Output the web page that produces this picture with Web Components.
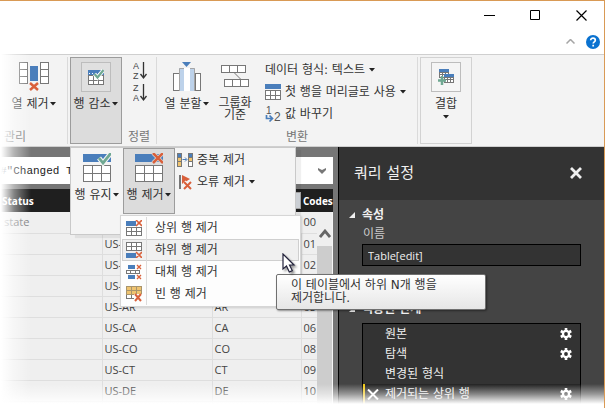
<!DOCTYPE html>
<html lang="ko">
<head>
<meta charset="utf-8">
<title>쿼리 편집기</title>
<style>
  html, body { margin: 0; height: 100%; overflow: hidden; }
  body { background: #fff; color: #333; font: 12px/16px "DejaVu Sans", "Noto Sans CJK KR", sans-serif; }
</style>
</head>
<body>
<query-window>
  <title-bar slot="title"></title-bar>

  <ribbon-bar slot="ribbon">
    <ribbon-group label="관리" style="--w:67px;--align:flex-start;--pad:8px;--label-pad:4px">
      <tool-button icon="colRemove" label="열 제거" caret></tool-button>
    </ribbon-group>
    <ribbon-group style="--w:56px;--pad:2px">
      <tool-button icon="reduce" label="행 감소" caret boxed pressed></tool-button>
      <drop-panel slot="popup">
        <tool-button icon="rowsKeep" label="행 유지" caret></tool-button>
        <tool-button icon="rowsRemove" label="행 제거" caret pressed></tool-button>
        <tool-stack>
          <tool-row icon="dup" label="중복 제거"></tool-row>
          <tool-row icon="err" label="오류 제거" caret></tool-row>
        </tool-stack>
        <menu-list slot="menu">
          <menu-item icon="mTop">상위 행 제거</menu-item>
          <menu-item icon="mBottom" active>하위 행 제거
            <tip-box slot="tip">이 테이블에서 하위 N개 행을 제거합니다.</tip-box>
          </menu-item>
          <menu-item icon="mAlt">대체 행 제거</menu-item>
          <menu-item icon="mBlank">빈 행 제거</menu-item>
        </menu-list>
      </drop-panel>
    </ribbon-group>
    <ribbon-group label="정렬" style="--w:31px;--align:flex-start;--label-pad:3px">
      <tool-stack sort>
        <tool-row icon="az" name="오름차순 정렬"></tool-row>
        <tool-row icon="za" name="내림차순 정렬"></tool-row>
      </tool-stack>
    </ribbon-group>
    <ribbon-group label="변환" style="--w:260px;--pad:4px;--label-pad:20px">
      <tool-button icon="split" label="열 분할" caret></tool-button>
      <tool-button icon="group" label="그룹화 기준" wrap></tool-button>
      <tool-stack wide>
        <tool-row label="데이터 형식: 텍스트" caret></tool-row>
        <tool-row icon="header" label="첫 행을 머리글로 사용" caret></tool-row>
        <tool-row icon="replace" label="값 바꾸기"></tool-row>
      </tool-stack>
    </ribbon-group>
    <ribbon-group last style="--w:58px;--pad:2px">
      <tool-button icon="combine" label="결합" caret below boxed framed></tool-button>
    </ribbon-group>
  </ribbon-bar>

  <data-view slot="data"></data-view>

  <settings-pane slot="side" heading="쿼리 설정">
    <pane-section heading="속성">
      <name-field label="이름" value="Table[edit]"></name-field>
    </pane-section>
    <pane-section heading="적용된 단계" steps>
      <step-list>
        <step-item gear>원본</step-item>
        <step-item gear>탐색</step-item>
        <step-item>변경된 형식</step-item>
        <step-item gear selected>제거되는 상위 행</step-item>
      </step-list>
    </pane-section>
  </settings-pane>
</query-window>

<script>
const BLUE = '#4a7ebb', RED = '#d9603b', GREEN = '#6fa892', GOLD = '#efc36f', INK = '#777';
const cells = (x, y, w, h, cols, rows, fill = '#fff', stroke = INK) => {
  let d = '';
  for (let i = 1; i < cols; i++) d += `M${x + .5 + Math.round((w - 1) * i / cols)} ${y}v${h}`;
  for (let i = 1; i < rows; i++) d += `M${x} ${y + .5 + Math.round((h - 1) * i / rows)}h${w}`;
  return `<g stroke="${stroke}" fill="${fill}"><rect x="${x + .5}" y="${y + .5}" width="${w - 1}" height="${h - 1}"/><path d="${d}"/></g>`;
};
const bar = (x, y, w, h, f = BLUE) => `<rect x="${x}" y="${y}" width="${w}" height="${h}" fill="${f}"/>`;
const cross = (x, y, w, h, s = 2) => `<path d="M${x} ${y}l${w} ${h}M${x + w} ${y}l${-w} ${h}" stroke="${RED}" stroke-width="${s}" fill="none"/>`;
const sortIcon = (a, b) => `<g font-family="Liberation Sans, sans-serif" font-size="9" fill="#444"><text x="0" y="8">${a}</text><text x="0" y="18">${b}</text></g><path d="M10.500 1v15M7.500 13l3 4 3-4" fill="none" stroke="#333" stroke-width="1.300"/>`;

const ICONS = {
  colRemove: [30, 30, cells(0, 0, 9, 22, 1, 3) + cells(21, 0, 9, 22, 1, 3) + bar(11, 4, 8, 15) + cross(11, 21, 8, 7, 2.5)],
  reduce: [16, 16, bar(0, 1, 16, 5) + '<path d="M1 4.500h15" stroke="#fff" stroke-dasharray="1 2"/>' + cells(0, 6, 16, 10, 3, 2) + `<path d="M6.500 5l3 3.500L15.500 1" fill="none" stroke="#fff" stroke-width="4"/><path d="M6.500 5l3 3.500L15.500 1" fill="none" stroke="${GREEN}" stroke-width="2.200"/>`],
  az: [15, 20, sortIcon('A', 'Z')],
  za: [15, 20, sortIcon('Z', 'A')],
  split: [30, 30, `<path d="M10 0h9l-4.500 5z" fill="${BLUE}"/>` + cells(1, 11, 7, 18, 1, 1) + cells(23, 11, 6, 18, 1, 1) + bar(7, 6, 5, 23, '#bdd2ea') + bar(18, 6, 5, 23, '#bdd2ea') + bar(12, 6, 6, 23, '#fff') + '<path d="M7.500 29V6.500H12M18 6.500h4.500V29" fill="none" stroke="#a5a5a5"/>'],
  group: [30, 30, cells(1, 3, 25, 8, 3, 1) + cells(4, 17, 25, 8, 3, 1) + '<path d="M14.500 11l6 6" stroke="#777"/>'],
  header: [16, 16, bar(0, 0, 16, 5) + cells(0, 6, 16, 10, 3, 2)],
  replace: [16, 18, `<g font-family="Liberation Sans, sans-serif" fill="#555"><text x="1" y="9" font-size="10">1</text><text x="9" y="16" font-size="12">2</text></g><path d="M1.500 10v3.500h5M4.500 10.500l3 3-3 3" fill="none" stroke="${BLUE}" stroke-width="1.700"/>`],
  combine: [16, 16, cells(1, 0, 10, 9, 3, 3) + bar(1, 0, 10, 3) + cells(6, 5, 10, 9, 3, 3) + bar(6, 5, 10, 3) + `<path d="M4 7v9M0 11.500h8" stroke="${GREEN}" stroke-width="2.500"/>`],
  rowsKeep: [28, 30, bar(0, 1, 28, 8) + cells(0, 12, 28, 17, 3, 2) + `<path d="M16 5l4 5L28 0" fill="none" stroke="#f4f4f4" stroke-width="5"/><path d="M16 5l4 5L28 0" fill="none" stroke="${GREEN}" stroke-width="2.800"/>`],
  rowsRemove: [28, 30, bar(0, 1, 28, 8) + cells(0, 12, 28, 17, 3, 2) + '<path d="M18 0l10 10M28 0L18 10" stroke="#dcdcdc" stroke-width="4"/>' + cross(18, 0, 10, 10, 2.5)],
  dup: [16, 16, [0, 11].map((x, i) => bar(x, 1, 5, 14, '#777') + bar(x + 1, 2, 3, 3, BLUE) + bar(x + 1, 6, 3, 3, GOLD) + bar(x + 1, 10, 3, 4, i ? '#fff' : GOLD)).join('') + `<path d="M5.500 7.500h4M8 5.500l2 2-2 2" fill="none" stroke="${BLUE}"/>`],
  err: [16, 16, bar(2, 1, 2, 14, '#777') + `<path d="M5 1l8 4-8 5z" fill="${RED}"/>` + '<path d="M7 8l7 7M14 8l-7 7" stroke="#f4f4f4" stroke-width="4"/>' + cross(7, 8, 7, 7)],
  mTop: [16, 16, bar(0, 1, 10, 5) + cross(10, 0, 6, 6, 1.6) + cells(0, 7, 16, 9, 3, 2)],
  mBottom: [16, 16, cells(0, 0, 16, 9, 3, 2) + bar(0, 11, 10, 5) + cross(10, 10, 6, 6, 1.6)],
  mAlt: [16, 16, bar(2, 1, 7, 4) + cross(11, 1, 4, 4, 1.3) + cells(0, 6, 14, 4, 3, 1) + bar(2, 11, 7, 4) + cross(11, 11, 4, 4, 1.3)],
  mBlank: [16, 16, cells(0, 0, 16, 13, 3, 3) + cells(0, 0, 16, 9, 3, 2, GOLD, '#a8946c') + bar(8, 8, 8, 8, '#fdfdfd') + cross(9, 8, 6, 7, 2)],
  caret: [6, 4, '<path d="M0 0h6L3 3.500z" fill="#222"/>'],
  min: [11, 11, '<path d="M0 5.500h11" stroke="#000"/>'],
  max: [10, 10, '<path d="M.5.5h9v9h-9z" fill="none" stroke="#000"/>'],
  close: [11, 11, '<path d="M.5.5l10 10M10.500.5l-10 10" stroke="#000" stroke-width="1.200"/>'],
  up: [9, 5, '<path d="M.5 4.500l4-4 4 4" fill="none" stroke="#a5a5a5" stroke-width="1.500"/>'],
  help: [14, 14, '<circle cx="7" cy="7" r="7" fill="#0a72d0"/><path d="M4.700 5.300c0-3 4.600-2.900 4.600 0 0 1.600-2.100 1.600-2.100 3.300M7.200 9.800v1.800" fill="none" stroke="#fff" stroke-width="1.700"/>'],
  chev: [8, 6, '<path d="M0 0l4 2 4-2v2L4 6 0 2z" fill="#777"/>'],
  scroll: [12, 9, '<path d="M1 8l5-6 5 6" fill="none" stroke="#666" stroke-width="2.800"/>'],
  paneClose: [12, 12, '<path d="M1 1l10 10M11 1L1 11" stroke="#f0f0f0" stroke-width="2.800"/>'],
  tri: [6, 6, '<path d="M6 0v6H0z" fill="#f0f0f0"/>'],
  gear: [12, 12, '<path d="M6 0v12M.8 3l10.400 6M.8 9l10.400-6" stroke="#fff" stroke-width="2.600"/><circle cx="6" cy="6" r="3.100" fill="none" stroke="#fff" stroke-width="2.200"/><circle cx="6" cy="6" r="1.900" fill="#333"/>'],
  del: [12, 11, '<path d="M1 .5l10 10M11 .5l-10 10" stroke="#fff" stroke-width="2"/>'],
  pointer: [14, 20, '<path d="M1 1v15l3.500-3 2.800 6 3-1.400L7.500 12H12z" fill="#fff" stroke="#22223c" stroke-width="1.200"/>']
};

const define = (name, render) => customElements.define(name, class extends HTMLElement {
  connectedCallback() {
    if (this.shadowRoot) return;
    const t = document.createElement('template');
    t.innerHTML = render(this);
    this.attachShadow({ mode: 'open' }).append(t.content.cloneNode(true));
  }
});
const at = (el, n) => el.getAttribute(n) || '';
const reset = `*{box-sizing:border-box} button{margin:0;padding:0;border:0;background:none;color:inherit;font:inherit;line-height:inherit;display:flex;align-items:center;justify-content:center}`;

define('ui-icon', el => {
  const [w, h, body] = ICONS[at(el, 'name')];
  return `<style>:host{display:block;flex:none} svg{display:block}</style><svg width="${w}" height="${h}" viewBox="0 0 ${w} ${h}" aria-hidden="true">${body}</svg>`;
});

define('query-window', () => `<style>
  *{box-sizing:border-box}
  :host{display:flex;flex-direction:column;height:100vh;position:relative;overflow:hidden;box-sizing:border-box;border:solid #d99a55;border-width:1px 1px 0 0}
  .work{flex:1;min-height:0;display:flex}
  .fade{position:absolute;inset:-1px -1px 0 0;pointer-events:none;z-index:9;
    background:linear-gradient(to top,#fff 4px,rgba(255,255,255,.45) 14px,rgba(255,255,255,0) 24px),linear-gradient(to right,#fff 1px,rgba(255,255,255,.45) 14px,rgba(255,255,255,0) 31px)}
</style><slot name="title"></slot><slot name="ribbon"></slot><div class="work"><slot name="data"></slot><slot name="side"></slot></div><div class="fade"></div>`);

define('title-bar', () => `<style>${reset}
  :host{display:block}
  div{display:flex;justify-content:flex-end}
  .win button{width:46px;height:28px}
  .sub{height:25px;align-items:center;gap:11px;padding-right:4px}
</style><div class="win"><button aria-label="최소화"><ui-icon name="min"></ui-icon></button><button aria-label="최대화"><ui-icon name="max"></ui-icon></button><button aria-label="닫기"><ui-icon name="close"></ui-icon></button></div>
<div class="sub"><button aria-label="리본 접기"><ui-icon name="up"></ui-icon></button><button aria-label="도움말"><ui-icon name="help"></ui-icon></button></div>`);

define('ribbon-bar', () => `<style>
  :host{display:flex;box-sizing:border-box;height:93px;padding:2px 0;position:relative;z-index:2;background:#f3f3f3;border:solid #cfcfcf;border-width:1px 0}
</style><slot></slot>`);

define('ribbon-group', el => `<style>*{box-sizing:border-box}
  :host{display:flex;flex-direction:column;flex:none;box-sizing:border-box;position:relative;width:calc(var(--w) + 1px);border-right:${el.hasAttribute('last') || !el.hasAttribute('label') ? 0 : '1px solid #dadada'}}
  .tools{flex:1;min-height:0;display:flex;padding:0 0 0 var(--pad,0)}
  .label{flex:none;height:16px;display:flex;justify-content:var(--align,center);padding:0 0 0 var(--label-pad,0);color:#777;margin-bottom:-1px}
</style><div class="tools"><slot></slot></div>${at(el, 'label') ? `<div class="label">${at(el, 'label')}</div>` : ''}<slot name="popup"></slot>`);

define('tool-button', el => {
  const has = n => el.hasAttribute(n);
  const caret = has('caret') ? '<ui-icon name="caret"></ui-icon>' : '';
  return `<style>${reset}
  :host{display:block;flex:none;width:${has('wrap') ? 44 : 52}px}
  button{width:100%;height:${has('boxed') ? '100%' : '66px'};flex-direction:column;justify-content:flex-start;border:1px solid ${has('pressed') ? '#9c9c9c' : has('framed') ? '#d2d2d2' : 'transparent'};background:${has('pressed') ? '#dcdcdc' : 'transparent'};padding-top:4px}
  .pic{height:30px;width:30px;display:grid;place-items:center;margin-bottom:4px;${has('boxed') ? 'border:1px solid #bdbdbd;background:' + (has('pressed') ? '#e0e0e0' : '#f5f5f5') : ''}}
  .text{display:flex;align-items:center;gap:2px;white-space:nowrap;${has('wrap') ? 'white-space:normal;width:36px;line-height:12px;text-align:center;padding-top:1px' : ''}${has('below') ? 'flex-direction:column;gap:3px' : ''}}
</style><button><span class="pic"><ui-icon name="${at(el, 'icon')}"></ui-icon></span><span class="text">${at(el, 'label')}${caret}</span></button>`;
});

define('tool-stack', el => `<style>:host{display:flex;flex-direction:column;padding:${el.hasAttribute('sort') ? '3px 0 0 8px' : el.hasAttribute('wide') ? '2px 0 0 8px' : '1px 0 0 2px'}}</style><slot></slot>`);

define('tool-row', el => `<style>${reset}
  :host{display:block}
  button{height:22px;gap:4px;white-space:nowrap}
</style><button aria-label="${at(el, 'name') || at(el, 'label')}">${at(el, 'icon') ? `<ui-icon name="${at(el, 'icon')}"></ui-icon>` : ''}${at(el, 'label') ? `<span>${at(el, 'label')}</span>` : ''}${el.hasAttribute('caret') ? '<ui-icon name="caret"></ui-icon>' : ''}</button>`);

define('drop-panel', () => `<style>
  :host{position:absolute;left:2px;top:calc(100% + 3px);display:flex;box-sizing:border-box;width:226px;height:88px;background:#f4f4f4;border:1px solid #c9c9c9;box-shadow:5px 3px 1px rgba(0,0,0,.06)}
</style><slot></slot><slot name="menu"></slot>`);

define('menu-list', () => `<style>
  :host{position:absolute;left:49px;top:67px;display:block;box-sizing:border-box;width:181px;padding:1px;background:#fdfdfd;border:1px solid #d6d6d6;box-shadow:1px 1px 2px rgba(0,0,0,.15)}
</style><slot></slot>`);

define('menu-item', el => `<style>${reset}
  :host{display:block;position:relative}
  button{width:100%;height:22px;justify-content:flex-start;padding-left:3px;border:1px solid ${el.hasAttribute('active') ? '#cfcfcf' : 'transparent'};background:${el.hasAttribute('active') ? '#f0f0f0' : 'none'}}
  .sep{width:1px;height:22px;background:#dcdcdc;margin:0 8px 0 4px}
  .pointer{position:absolute;left:160px;top:14px;z-index:3;filter:drop-shadow(2px 2px 1px rgba(0,0,0,.4))}
</style><button><ui-icon name="${at(el, 'icon')}"></ui-icon><span class="sep"></span><span><slot></slot></span></button><slot name="tip"></slot>${el.hasAttribute('active') ? '<ui-icon class="pointer" name="pointer"></ui-icon>' : ''}`);

define('tip-box', () => `<style>
  :host{position:absolute;left:154px;top:35px;z-index:2;display:block;box-sizing:border-box;width:210px;padding:4px 34px 4px 14px;line-height:13px;word-break:keep-all;background:linear-gradient(#fff,#e6e6e6);border:1px solid #707070;border-radius:2px;box-shadow:1px 1px 2px rgba(0,0,0,.4)}
</style><slot></slot>`);

define('data-view', () => {
  const rows = [['state', '', '', '00'], ['', 'US-AL', '', '01'], ['', 'US-AK', '', '02'], ['', 'US-AZ', '', ''], ['', 'US-AR', 'AR', '05'], ['', 'US-CA', 'CA', '06'], ['', 'US-CO', 'CO', '08'], ['', 'US-CT', 'CT', '09'], ['', 'US-DE', 'DE', '10'], ['', '', '', '']];
  return `<style>${reset}
  :host{flex:1;min-width:0;display:flex;flex-direction:column;background:#767676;padding:10px 5px 0 0;box-sizing:border-box;font-family:"Open Sans",sans-serif}
  .formula{display:flex;align-items:center;flex:none;height:27px;background:#fff;padding-right:7px;margin-bottom:5px}
  input{flex:1;min-width:0;border:0;padding:0;background:none;outline:0;color:#222;font:11px/16px "Liberation Mono",monospace}
  .grid{flex:1;min-height:0;overflow:hidden;position:relative;background:#efefef}
  table{width:100%;table-layout:fixed;border-collapse:collapse;font-size:11px;line-height:16px}
  th,td{padding:0 0 0 2px;text-align:left;white-space:nowrap;overflow:hidden}
  th{height:23px;background:#1f1f1f;color:#fff;font-size:10px}
  td{height:21px;border:solid #dedede;border-width:0 1px 1px 0;color:#444}
  td:first-child{padding-left:4px;color:#777}
  td:last-child{border-right:0}
  tr:first-child td:not(:last-child){border-right-color:#efefef}
  .filter{width:15px;height:17px;margin-left:auto;background:#d8dce2;border:1px solid #aaa}
  .bar{position:absolute;right:0;top:23px;bottom:0;width:16px;display:flex;flex-direction:column;background:#efefef;border-right:1px solid #f6f6f6}
  .bar button{height:34px;padding-top:8px}
  .thumb{flex:1;background:#cdcdcd}
</style>
<div class="formula"><input aria-label="수식" value='#"Changed T'><button aria-label="수식 펼치기"><ui-icon name="chev"></ui-icon></button></div>
<div class="grid"><table><colgroup><col style="width:102px"><col style="width:110px"><col style="width:89px"><col></colgroup>
<thead><tr><th>Status</th><th></th><th><button class="filter" aria-label="필터"></button></th><th>Codes</th></tr></thead>
<tbody>${rows.map(r => `<tr>${r.map(c => `<td>${c}</td>`).join('')}</tr>`).join('')}</tbody></table>
<div class="bar"><button aria-label="위로"><ui-icon name="scroll"></ui-icon></button><div class="thumb"></div></div></div>`;
});

define('settings-pane', el => `<style>${reset}
  :host{flex:none;display:block;box-sizing:border-box;width:266px;background:#444;border-left:1px solid #000;color:#f0f0f0}
  header{display:flex;align-items:center;justify-content:space-between;height:53px;padding:0 22px 2px 15px;background:#333}
  h1{margin:0;font-size:15px;line-height:20px;font-weight:400}
</style><header><h1>${at(el, 'heading')}</h1><button aria-label="닫기"><ui-icon name="paneClose"></ui-icon></button></header><slot></slot>`);

define('pane-section', el => `<style>
  :host{display:block;padding:7px 23px 0 10px}
  h2{display:flex;align-items:center;gap:7px;margin:0;font-size:12px;line-height:16px;font-weight:700}
  div{padding:${el.hasAttribute('steps') ? '6px' : '2px'} 0 0 13px}
</style><h2><ui-icon name="tri"></ui-icon>${at(el, 'heading')}</h2><div><slot></slot></div>`);

define('name-field', el => `<style>*{box-sizing:border-box}
  :host{display:block;padding-bottom:28px}
  label{display:block;line-height:18px;color:#ccc;padding-left:1px}
  input{display:block;width:100%;height:22px;margin-top:1px;padding:0 5px;border:1px solid #000;background:#333;color:#f0f0f0;outline:0;font:11px/16px "Open Sans",sans-serif}
</style><label for="n">${at(el, 'label')}</label><input id="n" value="${at(el, 'value')}">`);

define('step-list', () => `<style>:host{display:block;border:1px solid #000;background:#333}</style><slot></slot>`);

define('step-item', el => {
  const sel = el.hasAttribute('selected');
  return `<style>${reset}
  :host{display:flex;align-items:center;box-sizing:border-box;height:20px;padding-right:8px;${sel ? 'background:#222;border-left:2px solid #f2c811;' : 'border-left:2px solid transparent;'}}
  .del{width:20px;padding-right:4px;height:100%} .name{flex:1;color:#f0f0f0}
</style>${sel ? '<button class="del" aria-label="단계 삭제"><ui-icon name="del"></ui-icon></button>' : '<span class="del"></span>'}<span class="name"><slot></slot></span>${el.hasAttribute('gear') ? '<button aria-label="설정"><ui-icon name="gear"></ui-icon></button>' : ''}`;
});
</script>
</body>
</html>
